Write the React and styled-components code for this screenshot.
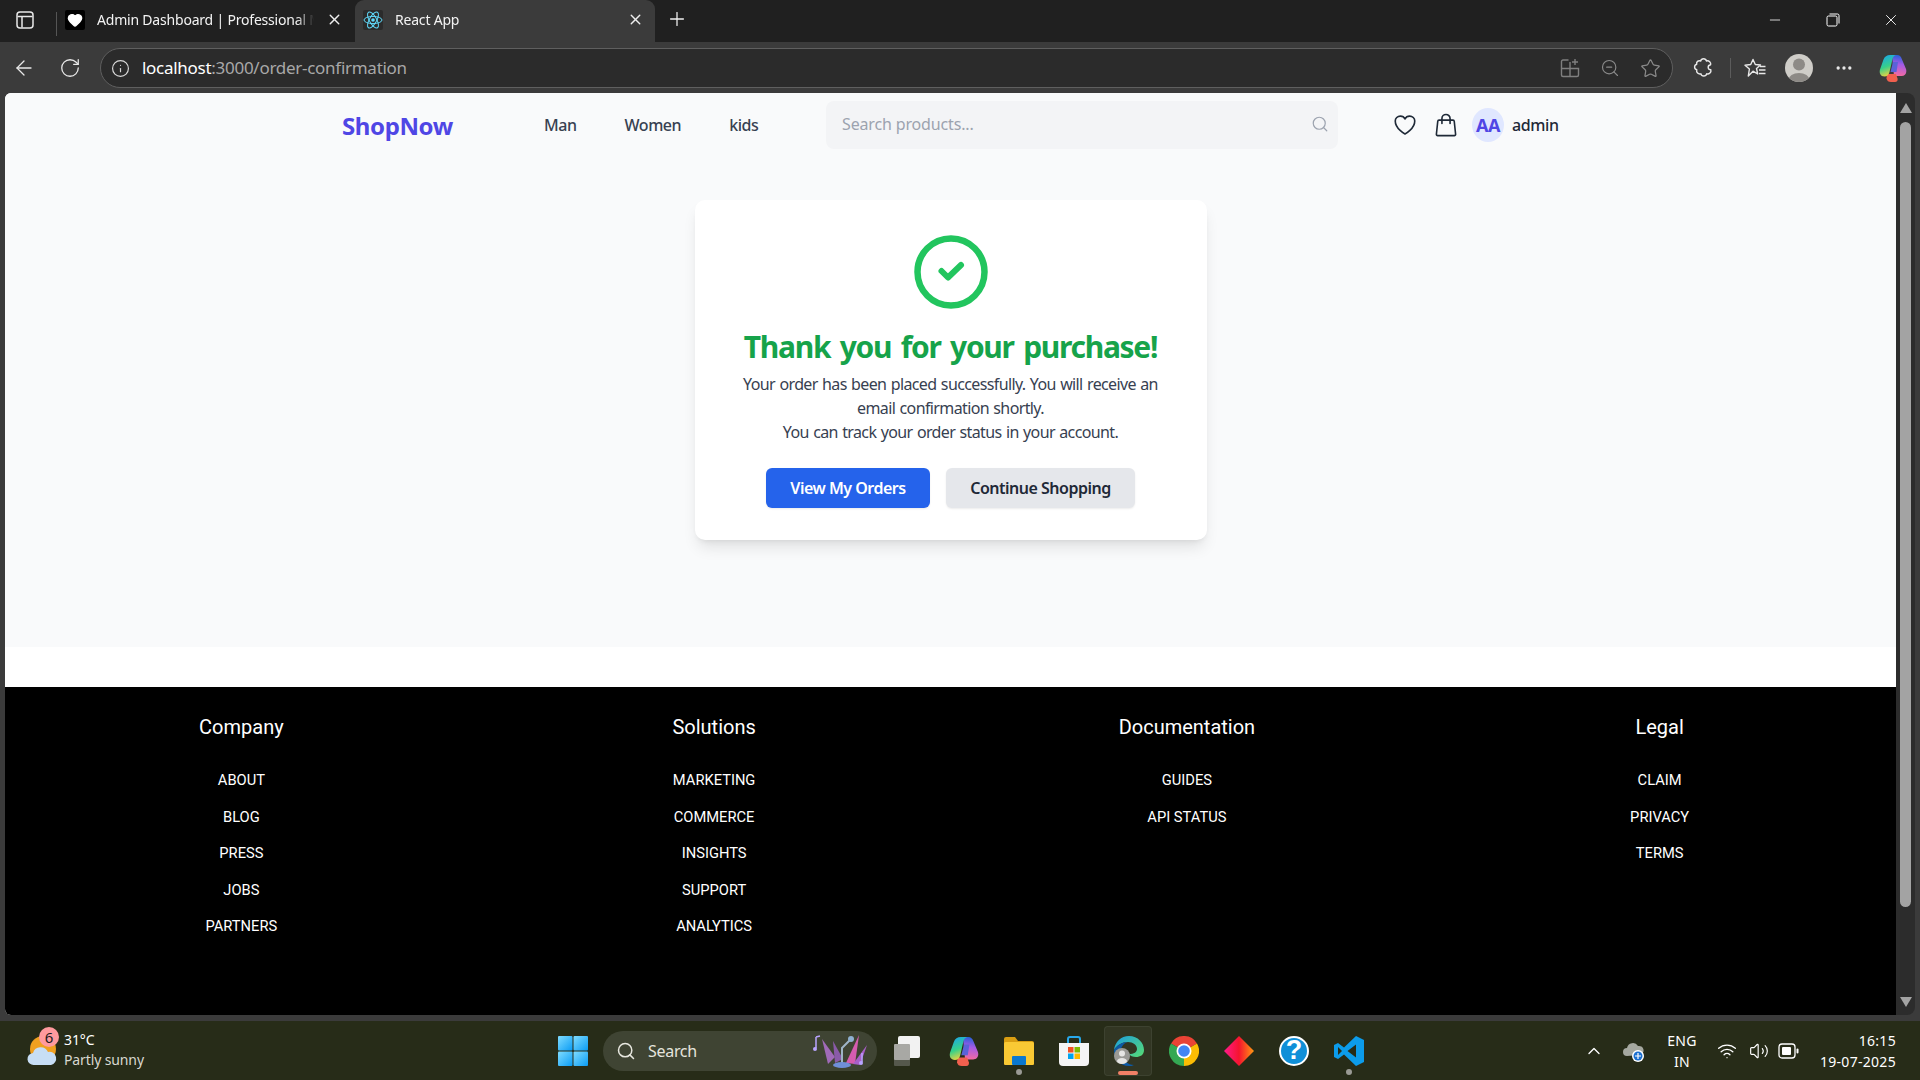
import React from 'react';
import styled, { createGlobalStyle } from 'styled-components';
import { Heart, Search, X, Plus, ArrowLeft, RotateCw, Info, ZoomOut, Star, Minus, ChevronUp, Wifi, Volume2, MoreHorizontal } from 'lucide-react';

const GlobalStyle = createGlobalStyle`
  html, body { margin: 0; padding: 0; height: 100%; overflow: hidden; }
  * { box-sizing: border-box; }
  body { font-family: "Noto Sans", sans-serif; background: #3b3b3b; }
`;

const uiFont = `"Noto Sans", "Open Sans", sans-serif`;

// ---- browser chrome ----
const Screen = styled.div`
  width: 1920px;
  height: 1080px;
  display: flex;
  flex-direction: column;
  overflow: hidden;
`;

const TabStrip = styled.div`
  height: 42px;
  background: #202020;
  display: flex;
  align-items: flex-end;
  color: #fff;
  flex: none;
`;

const SideToggle = styled.div`
  width: 56px;
  height: 42px;
  display: flex;
  align-items: center;
  justify-content: center;
  padding: 0 6px 2px 0;
`;

const TabDivider = styled.div`
  width: 1px;
  height: 24px;
  margin-bottom: 6px;
  background: #555;
`;

const Tab = styled.div`
  height: 42px;
  width: ${p => p.$width}px;
  margin-left: ${p => p.$offset || 0}px;
  padding: 0 ${p => (p.$active ? 11 : 3)}px 3px 8px;
  display: flex;
  align-items: center;
  gap: 12px;
  border-radius: 9px 9px 0 0;
  background: ${p => (p.$active ? '#3b3b3b' : 'transparent')};
  font-family: ${uiFont};
  font-size: 14px;
  letter-spacing: -0.2px;
  color: #f3f3f3;
`;

const TabTitle = styled.span`
  flex: 1;
  white-space: nowrap;
  overflow: hidden;
  -webkit-mask-image: linear-gradient(90deg, #000 92%, transparent);
  mask-image: linear-gradient(90deg, #000 92%, transparent);
`;

const Favicon = styled.div`
  width: 20px;
  height: 20px;
  border-radius: 2px;
  background: ${p => p.$bg};
  display: flex;
  align-items: center;
  justify-content: center;
  flex: none;
`;

const NewTab = styled.div`
  width: 44px;
  height: 42px;
  display: flex;
  align-items: center;
  justify-content: center;
  padding-bottom: 4px;
`;

const WindowButtons = styled.div`
  margin-left: auto;
  height: 42px;
  display: flex;
  align-items: center;
`;

const WindowButton = styled.div`
  width: 58px;
  height: 42px;
  display: flex;
  align-items: center;
  justify-content: center;
  padding-bottom: 2px;
`;

const Toolbar = styled.div`
  height: 51px;
  background: #3b3b3b;
  display: flex;
  align-items: center;
  flex: none;
  padding-top: 1px;
`;

const NavIcon = styled.div`
  width: ${p => p.$w || 45}px;
  margin-left: ${p => p.$ml || 0}px;
  height: 40px;
  display: flex;
  align-items: center;
  justify-content: center;
  flex: none;
`;

const AddressBar = styled.div`
  width: 1573px;
  height: 40px;
  margin-left: 8px;
  border: 1.5px solid #5f5f5f;
  border-radius: 20px;
  background: #2b2b2b;
  display: flex;
  align-items: center;
  padding: 0 2px 0 10px;
  font-family: ${uiFont};
  font-size: 17px;
  letter-spacing: -0.28px;
  flex: none;
`;

const Url = styled.span`
  margin-left: 12px;
  padding-bottom: 1px;
  color: #a8a8a8;
  & > b { color: #fff; font-weight: 400; }
`;

const AddressIcons = styled.div`
  margin-left: auto;
  display: flex;
  align-items: center;
`;

const ToolDivider = styled.div`
  width: 1px;
  height: 20px;
  background: #5c5c5c;
  flex: none;
`;

const ProfileDot = styled.div`
  width: 28px;
  height: 28px;
  border-radius: 50%;
  overflow: hidden;
`;

// ---- page viewport + scrollbar ----
const ViewRow = styled.div`
  height: 928px;
  padding-left: 5px;
  display: flex;
  background: #3b3b3b;
  flex: none;
`;

const PageView = styled.div`
  width: 1891px;
  height: 922px;
  display: flex;
  flex-direction: column;
  background: #fff;
  border-radius: 6px 0 0 6px;
  overflow: hidden;
  flex: none;
`;

const ScrollBar = styled.div`
  width: 19px;
  height: 922px;
  background: #2c2c2c;
  border-radius: 0 8px 8px 0;
  padding: 10px 4px;
  display: flex;
  flex-direction: column;
  align-items: center;
  flex: none;
`;

const ScrollArrow = styled.div`
  width: 0;
  height: 0;
  border-left: 6px solid transparent;
  border-right: 6px solid transparent;
  ${p => (p.$down ? 'border-top' : 'border-bottom')}: 10px solid #a3a3a3;
  flex: none;
`;

const ScrollThumb = styled.div`
  width: 11px;
  height: 785px;
  margin: 9px 0 90px;
  border-radius: 6px;
  background: #a3a3a3;
  flex: none;
`;

// ---- shop navbar ----
const ShopNav = styled.header`
  height: 64px;
  background: #f9fafb;
  display: flex;
  align-items: center;
  padding-left: 337px;
  flex: none;
`;

const Logo = styled.div`
  width: 202px;
  font-family: ${uiFont};
  font-size: 24px;
  font-weight: 700;
  letter-spacing: -0.38px;
  color: #4f46e5;
`;

const NavLinks = styled.nav`
  width: 282px;
  display: flex;
  gap: 48px;
`;

const NavLink = styled.a`
  font-family: ${uiFont};
  font-size: 16px;
  font-weight: 500;
  letter-spacing: -0.45px;
  color: #374151;
`;

const SearchBox = styled.div`
  width: 512px;
  height: 48px;
  background: #f3f4f6;
  border-radius: 8px;
  display: flex;
  align-items: center;
  justify-content: space-between;
  padding: 0 9px 2px 16px;
  font-family: ${uiFont};
  font-size: 16px;
  letter-spacing: -0.15px;
  color: #9ca3af;
`;

const UserArea = styled.div`
  display: flex;
  align-items: center;
  margin-left: 54px;
  color: #1f2937;
`;

const IconSlot = styled.div`
  width: ${p => p.$w}px;
  display: flex;
  color: #1f2937;
`;

const Avatar = styled.div`
  width: 32px;
  height: 34px;
  border-radius: 50%;
  background: #e0e7ff;
  color: #4f46e5;
  display: flex;
  align-items: center;
  justify-content: center;
  font-family: ${uiFont};
  font-size: 18px;
  font-weight: 700;
  letter-spacing: -0.5px;
`;

const UserName = styled.span`
  margin-left: 8px;
  font-family: ${uiFont};
  font-size: 16px;
  font-weight: 500;
  letter-spacing: -0.4px;
`;

// ---- confirmation ----
const Main = styled.main`
  height: 490px;
  background: #f9fafb;
  padding-top: 43px;
  display: flex;
  justify-content: center;
  align-items: flex-start;
  flex: none;
`;

const Card = styled.section`
  width: 512px;
  height: 340px;
  background: #fff;
  border-radius: 10px;
  box-shadow: 0 10px 15px -3px rgba(0, 0, 0, 0.1), 0 4px 6px -4px rgba(0, 0, 0, 0.1);
  padding: 35px 32px 32px;
  display: flex;
  flex-direction: column;
  align-items: center;
  text-align: center;
  font-family: ${uiFont};
`;

const Title = styled.h1`
  margin: 20px 0 7px;
  font-size: 30px;
  line-height: 36px;
  font-weight: 700;
  letter-spacing: -1.3px;
  word-spacing: 3px;
  color: #16a34a;
  white-space: nowrap;
`;

const Message = styled.p`
  margin: 0;
  font-size: 16px;
  line-height: 24px;
  letter-spacing: -0.62px;
  word-spacing: 0.8px;
  color: #374151;
  white-space: nowrap;
`;

const Actions = styled.div`
  margin-top: 24px;
  display: flex;
  gap: 16px;
`;

const ActionButton = styled.button`
  height: 40px;
  width: ${p => p.$width}px;
  border: 0;
  border-radius: 6px;
  background: ${p => (p.$primary ? '#2563eb' : '#e5e7eb')};
  color: ${p => (p.$primary ? '#fff' : '#1f2937')};
  font-family: ${uiFont};
  font-size: 16px;
  font-weight: 600;
  letter-spacing: -0.5px;
  box-shadow: 0 1px 2px rgba(0, 0, 0, 0.08);
`;

// ---- footer ----
const Footer = styled.footer`
  margin-top: 40px;
  flex: 1;
  background: #000;
  display: grid;
  grid-template-columns: repeat(4, 1fr);
  padding-top: 26px;
  font-family: Roboto, sans-serif;
  color: #fff;
  text-align: center;
`;

const FooterColumn = styled.div`
  display: flex;
  flex-direction: column;
  align-items: center;
`;

const FooterHeading = styled.h3`
  margin: 0 0 21px;
  font-size: 20px;
  line-height: 28px;
  font-weight: 450;
`;

const FooterLink = styled.a`
  height: 36.5px;
  line-height: 36px;
  font-size: 14.7px;
  font-weight: 450;
  text-transform: uppercase;
`;

// ---- windows taskbar ----
const Taskbar = styled.div`
  height: 59px;
  background: #272c18;
  display: flex;
  align-items: center;
  font-family: ${uiFont};
  color: #fff;
  flex: none;
`;

const Weather = styled.div`
  width: 558px;
  display: flex;
  align-items: center;
  padding-left: 27px;
  flex: none;
`;

const WeatherIcon = styled.div`
  position: relative;
  width: 37px;
  height: 30px;
  flex: none;
`;

const CountBadge = styled.span`
  position: absolute;
  left: 12px;
  top: -9px;
  width: 20px;
  height: 20px;
  border-radius: 50%;
  background: #ff9a9e;
  color: #1b1b1b;
  font-size: 15px;
  line-height: 20px;
  text-align: center;
`;

const WeatherText = styled.div`
  font-size: 14px;
  line-height: 20px;
  letter-spacing: -0.12px;
  padding-bottom: 2px;
  & > div + div { color: #d8d8d0; }
`;

const TaskSearch = styled.div`
  width: 274px;
  height: 40px;
  margin-left: 15px;
  border-radius: 20px;
  background: #3f4433;
  display: flex;
  align-items: center;
  padding: 0 8px 0 13px;
  font-size: 16px;
  letter-spacing: -0.3px;
  color: #e5e5de;
  flex: none;
`;

const SearchLabel = styled.span`
  margin-left: 12px;
  flex: 1;
`;

const TaskIcons = styled.div`
  margin-left: 17px;
  display: flex;
  align-items: center;
  gap: 25px;
  flex: none;
`;

const TaskSlot = styled.div`
  position: relative;
  width: 30px;
  height: 30px;
  display: flex;
  align-items: center;
  justify-content: center;
  flex: none;
  ${p => p.$active && `
    &::before {
      content: '';
      position: absolute;
      left: -10px;
      right: -8px;
      top: -10px;
      bottom: -10px;
      border-radius: 4px;
      background: rgba(255, 255, 255, 0.05);
      border: 1px solid rgba(255, 255, 255, 0.06);
    }
    &::after {
      content: '';
      position: absolute;
      left: 4px;
      width: 20px;
      height: 4px;
      bottom: -9px;
      border-radius: 2px;
      background: #f28066;
    }
  `}
  ${p => p.$running && `
    &::after {
      content: '';
      position: absolute;
      left: 12px;
      width: 6px;
      height: 6px;
      bottom: -9px;
      border-radius: 50%;
      background: #9a9a94;
    }
  `}
`;

const HelpGlyph = styled.div`
  width: 30px;
  height: 30px;
  border-radius: 50%;
  background: #0f8fd8;
  display: flex;
  align-items: center;
  justify-content: center;
  font-family: "Liberation Sans", sans-serif;
  font-size: 27px;
  font-weight: 700;
  color: #fff;
  border: 2px solid #fff;
`;

const Tray = styled.div`
  margin-left: auto;
  display: flex;
  align-items: center;
  padding-right: 24px;
  font-size: 14px;
  letter-spacing: 0.3px;
`;

const TrayIcon = styled.div`
  width: ${p => p.$w}px;
  display: flex;
  justify-content: center;
  flex: none;
`;

const TrayText = styled.div`
  width: ${p => p.$w}px;
  text-align: ${p => p.$align || 'center'};
  line-height: 21px;
  flex: none;
`;

const Glyph = styled.svg`
  display: block;
  position: relative;
  flex: none;
`;

// ---- drawn icons ----
const SidebarIcon = () => (
  <svg width="20" height="20" viewBox="0 0 20 20" fill="none" stroke="#e8e8e8" strokeWidth="1.5">
    <rect x="2" y="2" width="16" height="16" rx="3" />
    <path d="M2.5 6.5h15M7 6.5V17.5" />
  </svg>
);

const ReactIcon = () => (
  <svg width="20" height="20" viewBox="0 0 20 20" fill="none" stroke="#61dafb" strokeWidth="1">
    <circle cx="10" cy="10" r="1.8" fill="#61dafb" stroke="none" />
    <ellipse cx="10" cy="10" rx="9" ry="3.6" />
    <ellipse cx="10" cy="10" rx="9" ry="3.6" transform="rotate(60 10 10)" />
    <ellipse cx="10" cy="10" rx="9" ry="3.6" transform="rotate(120 10 10)" />
  </svg>
);

const RestoreIcon = () => (
  <svg width="14" height="14" viewBox="0 0 14 14" fill="none" stroke="#fff" strokeWidth="1">
    <rect x="1" y="3" width="10" height="10" rx="1.5" />
    <path d="M3.5 1h8a1.5 1.5 0 0 1 1.5 1.5v8" />
  </svg>
);

const SplitScreenIcon = () => (
  <svg width="20" height="20" viewBox="0 0 20 20" fill="none" stroke="#7f7f7f" strokeWidth="1.4">
    <path d="M8.5 2H3a1.5 1.5 0 0 0-1.5 1.5V17A1.5 1.5 0 0 0 3 18.5h14a1.5 1.5 0 0 0 1.5-1.5v-6.5H1.5M10 18.5V4" />
    <path d="M15 1v6M12 4h6" />
  </svg>
);

const ExtensionIcon = () => (
  <svg width="22" height="22" viewBox="0 0 20 20" fill="none" stroke="#e8e8e8" strokeWidth="1.3" strokeLinejoin="round">
    <path d="M7 3.6C7.6 1 11.6 1 12.2 3.6 14.5 2.9 16.6 4.9 16 7c-1.6.2-2.3 1.3-2.2 2.6.1 1.2 1 2 2.4 2 .6 2.3-1.5 4.3-3.8 3.7-.6 2.6-4.6 2.6-5.2 0-2.4.7-4.4-1.3-3.8-3.7-2.6-.6-2.6-4.4 0-5C2.8 4.3 4.7 2.9 7 3.6Z" />
  </svg>
);

const FavoritesIcon = () => (
  <svg width="22" height="20" viewBox="0 0 22 20" fill="none" stroke="#e8e8e8" strokeWidth="1.4" strokeLinejoin="round">
    <path d="M9 1.5 11.3 6.5 16.5 7 12.5 10.5 13.7 16 9 13.2 4.3 18 5.4 11 1 7.2 6.7 6.5Z" />
    <path d="M16 8.5h5.5M15 12h6.5M15 15.5h6.5" />
  </svg>
);

const ProfileIcon = () => (
  <svg width="28" height="28" viewBox="0 0 28 28">
    <rect width="28" height="28" fill="#cfcdc8" />
    <circle cx="14" cy="10.5" r="6" fill="#8d8a86" />
    <ellipse cx="14" cy="26" rx="10.5" ry="7" fill="#8d8a86" />
  </svg>
);

const CopilotIcon = ({ size = 28 }) => (
  <svg width={size} height={size} viewBox="0 0 28 28">
    <defs>
      <linearGradient id={`cpA${size}`} x1="0.2" y1="0" x2="0.5" y2="1">
        <stop offset="0" stopColor="#1aa6e8" />
        <stop offset="0.55" stopColor="#37d08a" />
        <stop offset="1" stopColor="#f5d33c" />
      </linearGradient>
      <linearGradient id={`cpB${size}`} x1="0.6" y1="0" x2="0.5" y2="1">
        <stop offset="0" stopColor="#2160d8" />
        <stop offset="0.45" stopColor="#a45be6" />
        <stop offset="1" stopColor="#f46aa0" />
      </linearGradient>
    </defs>
    <path d="M13 1h5c2.5 0 4 1.5 4.8 4L27 15c1.2 4-1 7-4.5 7H15L13 1Z" fill={`url(#cpB${size})`} />
    <path d="M8 20h9l1.5 4.5c.5 2-.5 3.500-2.500 3.500h-4c-2.500 0-4-1-4.500-3.500Z" fill="#f1604e" />
    <path d="M11 1h6c-2 .6-3 2-3.500 4l-3 13c-.6 2.500-2.500 4.500-5 4.500C1.500 22.500 0 19 1 15.500L4.500 5.500C5.500 2.500 8 1 11 1Z" fill={`url(#cpA${size})`} />
    <path d="M14 8h5l-1.500 10h-6Z" fill="#5a63d8" />
  </svg>
);

const WeatherArt = () => (
  <Glyph width="37" height="30" viewBox="0 0 37 30">
    <circle cx="16" cy="13" r="13" fill="#f0a020" />
    <path d="M7 29a6 6 0 0 1-1-12 8 8 0 0 1 15-1 6.5 6.5 0 0 1 3 13Z" fill="#c7def5" />
  </Glyph>
);

const WindowsLogo = () => (
  <Glyph width="30" height="30" viewBox="0 0 30 30">
    <defs>
      <linearGradient id="winTile" x1="0" y1="0" x2="1" y2="1">
        <stop offset="0" stopColor="#7fdcff" />
        <stop offset="1" stopColor="#0a9cf5" />
      </linearGradient>
    </defs>
    <rect x="0" y="0" width="14.5" height="14.5" rx="1" fill="url(#winTile)" />
    <rect x="15.5" y="0" width="14.5" height="14.5" rx="1" fill="url(#winTile)" />
    <rect x="0" y="15.5" width="14.5" height="14.5" rx="1" fill="url(#winTile)" />
    <rect x="15.5" y="15.5" width="14.5" height="14.5" rx="1" fill="url(#winTile)" />
  </Glyph>
);

const SearchArt = () => (
  <Glyph width="56" height="40" viewBox="0 0 56 40">
    <path d="M15 33 9 8 22 26Z" fill="#a06ab8" />
    <path d="M22 32 20 10 30 28Z" fill="#8a5aa8" />
    <path d="M33 32 46 4 42 33Z" fill="#d65cb0" />
    <path d="M40 33 54 14 47 34Z" fill="#a85fc8" />
    <path d="M29 32V17l9-9" fill="none" stroke="#9fb4c6" strokeWidth="2" />
    <circle cx="38" cy="8" r="3" fill="#8fb0d0" />
    <ellipse cx="29" cy="34" rx="9" ry="3" fill="#6f8fd8" />
    <path d="M3 6v11M3 6l4-1M49 22v9" stroke="#b9a4ff" strokeWidth="1.5" fill="none" />
    <circle cx="2" cy="18" r="2" fill="#b9a4ff" />
    <circle cx="48" cy="32" r="2" fill="#b9a4ff" />
  </Glyph>
);

const TaskViewIcon = () => (
  <svg width="30" height="30" viewBox="0 0 30 30">
    <rect x="0" y="16" width="16" height="14" rx="1" fill="#55584c" />
    <rect x="4" y="0" width="22" height="22" rx="2" fill="#f2f2f2" />
    <rect x="0" y="8" width="16" height="16" rx="1" fill="#a8a8a4" />
  </svg>
);

const FolderIcon = () => (
  <svg width="30" height="30" viewBox="0 0 30 30">
    <path d="M0 3a2 2 0 0 1 2-2h9l3 4h14a2 2 0 0 1 2 2v20a2 2 0 0 1-2 2H2a2 2 0 0 1-2-2Z" fill="#d99e12" />
    <rect x="0" y="6" width="30" height="23" rx="1.5" fill="#f9c934" />
    <rect x="8" y="20" width="14" height="9" rx="1" fill="#0a78cf" />
  </svg>
);

const StoreIcon = () => (
  <svg width="30" height="30" viewBox="0 0 30 30">
    <path d="M9 7V3a2 2 0 0 1 2-2h8a2 2 0 0 1 2 2v4" fill="none" stroke="#28a8ea" strokeWidth="2" />
    <path d="M0 7h30v19a4 4 0 0 1-4 4H4a4 4 0 0 1-4-4Z" fill="#f4f4f4" />
    <rect x="9" y="11" width="5.5" height="5.5" fill="#f25022" />
    <rect x="15.5" y="11" width="5.5" height="5.5" fill="#7fba00" />
    <rect x="9" y="17.5" width="5.5" height="5.5" fill="#00a4ef" />
    <rect x="15.5" y="17.5" width="5.5" height="5.5" fill="#ffb900" />
  </svg>
);

const EdgeIcon = () => (
  <Glyph width="30" height="30" viewBox="0 0 30 30">
    <defs>
      <linearGradient id="edgeTop" x1="0" y1="0" x2="1" y2="0.8">
        <stop offset="0" stopColor="#1b9de2" />
        <stop offset="1" stopColor="#52d67c" />
      </linearGradient>
    </defs>
    <path d="M15 0C24 0 30 7 30 14c0 5-4 7-8 7-3 0-6-1-7-3 5 0 8-2 8-5 0-4-4-7-9-7C8 6 3 9 0 14 1 6 7 0 15 0Z" fill="url(#edgeTop)" />
    <path d="M0 14C3 9 8 6 14 6c-5 1-8 6-7 12 1 6 7 11 13 11-2 1-3 1-5 1C6 30 0 23 0 14Z" fill="#0c5aa6" />
    <circle cx="8" cy="20" r="8" fill="#9a9a96" />
    <circle cx="8" cy="17.5" r="3" fill="#e6e6e4" />
    <ellipse cx="8" cy="25" rx="5" ry="3" fill="#e6e6e4" />
  </Glyph>
);

const ChromeIcon = () => (
  <svg width="30" height="30" viewBox="0 0 30 30">
    <path d="M15 15 2 7.5A15 15 0 0 1 28 7.5Z" fill="#ea4335" />
    <path d="M15 15 28 7.5A15 15 0 0 1 15 30Z" fill="#fbbc04" />
    <path d="M15 15 15 30A15 15 0 0 1 2 7.5Z" fill="#34a853" />
    <circle cx="15" cy="15" r="7.5" fill="#fff" />
    <circle cx="15" cy="15" r="5.8" fill="#4285f4" />
  </svg>
);

const DiamondIcon = () => (
  <svg width="30" height="30" viewBox="0 0 30 30">
    <defs>
      <linearGradient id="gem" x1="0" y1="0" x2="1" y2="0">
        <stop offset="0" stopColor="#ff1a8c" />
        <stop offset="0.5" stopColor="#f5142e" />
        <stop offset="1" stopColor="#ff9a12" />
      </linearGradient>
    </defs>
    <path d="M15 0 30 15 15 30 0 15Z" fill="url(#gem)" />
  </svg>
);

const VsCodeIcon = () => (
  <svg width="30" height="30" viewBox="0 0 30 30">
    <path fillRule="evenodd" d="M22 0 30 4V26L22 30 10 18.5 4 23 0 21V9L4 7 10 11.5ZM22 8.5 13.5 15 22 21.5ZM4 11V19L8 15Z" fill="#0c9ceb" />
  </svg>
);

const OneDriveIcon = () => (
  <svg width="24" height="24" viewBox="0 0 24 24">
    <path d="M5 17a4 4 0 0 1 0-8 6 6 0 0 1 11-2 4.5 4.5 0 0 1 2 9Z" fill="#a5a8a0" />
    <circle cx="16" cy="17" r="6" fill="#fff" />
    <circle cx="16" cy="17" r="4.5" fill="#1a6fd0" />
    <path d="M13 17h6M16 14v6" stroke="#fff" strokeWidth="1.2" />
  </svg>
);

const BatteryIcon = () => (
  <svg width="22" height="20" viewBox="0 0 22 20" fill="none">
    <rect x="1" y="3" width="16" height="14" rx="3" stroke="#fff" strokeWidth="1.3" />
    <rect x="4" y="6" width="9" height="8" rx="1" fill="#fff" />
    <rect x="18.5" y="7.5" width="2" height="5" rx="1" fill="#fff" />
  </svg>
);

const SuccessIcon = () => (
  <Glyph width="74" height="74" viewBox="0 0 74 74" fill="none" stroke="#22c55e">
    <circle cx="37" cy="37" r="33.5" strokeWidth="6.5" />
    <path d="M27.5 36l6.5 6.5 13-12.5" strokeWidth="6" strokeLinecap="round" strokeLinejoin="round" />
  </Glyph>
);

const OutlineHeart = () => (
  <Glyph width="26" height="26" viewBox="0 0 24 24" fill="none" stroke="currentColor" strokeWidth="1.5" strokeLinejoin="round">
    <path d="M21 8.25c0-2.485-2.099-4.5-4.688-4.5-1.935 0-3.597 1.126-4.312 2.733-.715-1.607-2.377-2.733-4.313-2.733C5.1 3.75 3 5.765 3 8.25c0 7.22 9 12 9 12s9-4.78 9-12z" />
  </Glyph>
);

const OutlineBag = () => (
  <Glyph width="26" height="26" viewBox="0 0 24 24" fill="none" stroke="currentColor" strokeWidth="1.5" strokeLinecap="round" strokeLinejoin="round">
    <path d="M15.75 10.5V6a3.75 3.75 0 1 0-7.5 0v4.5m11.356-1.993 1.263 12c.07.665-.45 1.243-1.119 1.243H4.25a1.125 1.125 0 0 1-1.12-1.243l1.264-12A1.125 1.125 0 0 1 5.513 7.5h12.974c.576 0 1.059.435 1.119 1.007Z" />
  </Glyph>
);

const footerColumns = [
  { title: 'Company', links: ['About', 'Blog', 'Press', 'Jobs', 'Partners'] },
  { title: 'Solutions', links: ['Marketing', 'Commerce', 'Insights', 'Support', 'Analytics'] },
  { title: 'Documentation', links: ['Guides', 'API Status'] },
  { title: 'Legal', links: ['Claim', 'Privacy', 'Terms'] },
];

const App = () => {
  return (
    <Screen>
      <GlobalStyle />
      <TabStrip>
        <SideToggle><SidebarIcon /></SideToggle>
        <TabDivider />
        <Tab $width={289}>
          <Favicon $bg="#000"><Heart size={16} fill="#fff" color="#fff" /></Favicon>
          <TabTitle>Admin Dashboard | Professional Management</TabTitle>
          <X size={17} color="#eee" />
        </Tab>
        <Tab $active $width={300} $offset={9}>
          <Favicon $bg="#2b2b2b"><ReactIcon /></Favicon>
          <TabTitle>React App</TabTitle>
          <X size={17} color="#eee" />
        </Tab>
        <NewTab><Plus size={22} color="#eee" strokeWidth={1.4} /></NewTab>
        <WindowButtons>
          <WindowButton><Minus size={16} color="#fff" strokeWidth={1.2} /></WindowButton>
          <WindowButton><RestoreIcon /></WindowButton>
          <WindowButton><X size={18} color="#fff" strokeWidth={1.2} /></WindowButton>
        </WindowButtons>
      </TabStrip>
      <Toolbar>
        <NavIcon $w={47}><ArrowLeft size={24} color="#e8e8e8" strokeWidth={1.3} /></NavIcon>
        <NavIcon $w={45}><RotateCw size={22} color="#e8e8e8" strokeWidth={1.4} /></NavIcon>
        <AddressBar>
          <Info size={19} color="#d8d8d8" strokeWidth={1.5} />
          <Url><b>localhost</b>:3000/order-confirmation</Url>
          <AddressIcons>
            <NavIcon $w={40}><SplitScreenIcon /></NavIcon>
            <NavIcon $w={40}><ZoomOut size={20} color="#8a8a8a" strokeWidth={1.4} /></NavIcon>
            <NavIcon $w={40}><Star size={21} color="#8a8a8a" strokeWidth={1.4} /></NavIcon>
          </AddressIcons>
        </AddressBar>
        <NavIcon $w={52} $ml={5}><ExtensionIcon /></NavIcon>
        <ToolDivider />
        <NavIcon $w={48}><FavoritesIcon /></NavIcon>
        <NavIcon $w={40}><ProfileDot><ProfileIcon /></ProfileDot></NavIcon>
        <NavIcon $w={50}><MoreHorizontal size={20} color="#e8e8e8" /></NavIcon>
        <NavIcon $w={48}><CopilotIcon /></NavIcon>
      </Toolbar>
      <ViewRow>
        <PageView>
          <ShopNav>
            <Logo>ShopNow</Logo>
            <NavLinks>
              <NavLink>Man</NavLink>
              <NavLink>Women</NavLink>
              <NavLink>kids</NavLink>
            </NavLinks>
            <SearchBox>
              Search products...
              <Search size={18} color="#9ca3af" strokeWidth={1.6} />
            </SearchBox>
            <UserArea>
              <IconSlot $w={41}><OutlineHeart /></IconSlot>
              <IconSlot $w={39}><OutlineBag /></IconSlot>
              <Avatar>AA</Avatar>
              <UserName>admin</UserName>
            </UserArea>
          </ShopNav>
          <Main>
            <Card>
              <SuccessIcon />
              <Title>Thank you for your purchase!</Title>
              <Message>
                Your order has been placed successfully. You will receive an<br />
                email confirmation shortly.<br />
                You can track your order status in your account.
              </Message>
              <Actions>
                <ActionButton $primary $width={164}>View My Orders</ActionButton>
                <ActionButton $width={189}>Continue Shopping</ActionButton>
              </Actions>
            </Card>
          </Main>
          <Footer>
            {footerColumns.map(col => (
              <FooterColumn key={col.title}>
                <FooterHeading>{col.title}</FooterHeading>
                {col.links.map(link => <FooterLink key={link}>{link}</FooterLink>)}
              </FooterColumn>
            ))}
          </Footer>
        </PageView>
        <ScrollBar>
          <ScrollArrow />
          <ScrollThumb />
          <ScrollArrow $down />
        </ScrollBar>
      </ViewRow>
      <Taskbar>
        <Weather>
          <WeatherIcon>
            <WeatherArt />
            <CountBadge>6</CountBadge>
          </WeatherIcon>
          <WeatherText>
            <div>31°C</div>
            <div>Partly sunny</div>
          </WeatherText>
        </Weather>
        <WindowsLogo />
        <TaskSearch>
          <Search size={20} color="#e8e8e0" strokeWidth={1.8} />
          <SearchLabel>Search</SearchLabel>
          <SearchArt />
        </TaskSearch>
        <TaskIcons>
          <TaskSlot><TaskViewIcon /></TaskSlot>
          <TaskSlot><CopilotIcon size={30} /></TaskSlot>
          <TaskSlot $running><FolderIcon /></TaskSlot>
          <TaskSlot><StoreIcon /></TaskSlot>
          <TaskSlot $active><EdgeIcon /></TaskSlot>
          <TaskSlot><ChromeIcon /></TaskSlot>
          <TaskSlot><DiamondIcon /></TaskSlot>
          <TaskSlot><HelpGlyph>?</HelpGlyph></TaskSlot>
          <TaskSlot $running><VsCodeIcon /></TaskSlot>
        </TaskIcons>
        <Tray>
          <TrayIcon $w={40}><ChevronUp size={20} color="#fff" strokeWidth={1.6} /></TrayIcon>
          <TrayIcon $w={40}><OneDriveIcon /></TrayIcon>
          <TrayText $w={56}>ENG<br />IN</TrayText>
          <TrayIcon $w={34}><Wifi size={20} color="#fff" strokeWidth={1.6} /></TrayIcon>
          <TrayIcon $w={29}><Volume2 size={20} color="#fff" strokeWidth={1.4} /></TrayIcon>
          <TrayIcon $w={31}><BatteryIcon /></TrayIcon>
          <TrayText $w={92} $align="right">16:15<br />19-07-2025</TrayText>
        </Tray>
      </Taskbar>
    </Screen>
  );
};

export default App;
